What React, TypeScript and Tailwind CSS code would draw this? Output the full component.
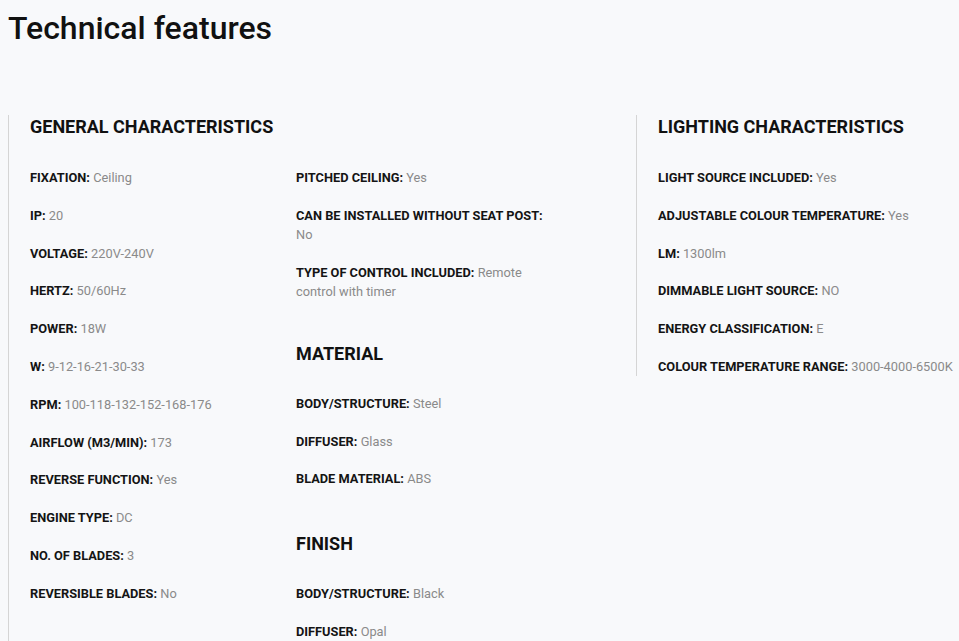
const general: [string, string][] = [
  ["FIXATION:", "Ceiling"],
  ["IP:", "20"],
  ["VOLTAGE:", "220V-240V"],
  ["HERTZ:", "50/60Hz"],
  ["POWER:", "18W"],
  ["W:", "9-12-16-21-30-33"],
  ["RPM:", "100-118-132-152-168-176"],
  ["AIRFLOW (M3/MIN):", "173"],
  ["REVERSE FUNCTION:", "Yes"],
  ["ENGINE TYPE:", "DC"],
  ["NO. OF BLADES:", "3"],
  ["REVERSIBLE BLADES:", "No"],
];

const generalMore: [string, string][] = [
  ["PITCHED CEILING:", "Yes"],
  ["CAN BE INSTALLED WITHOUT SEAT POST:", "No"],
  ["TYPE OF CONTROL INCLUDED:", "Remote control with timer"],
];

const material: [string, string][] = [
  ["BODY/STRUCTURE:", "Steel"],
  ["DIFFUSER:", "Glass"],
  ["BLADE MATERIAL:", "ABS"],
];

const finish: [string, string][] = [
  ["BODY/STRUCTURE:", "Black"],
  ["DIFFUSER:", "Opal"],
];

const lighting: [string, string][] = [
  ["LIGHT SOURCE INCLUDED:", "Yes"],
  ["ADJUSTABLE COLOUR TEMPERATURE:", "Yes"],
  ["LM:", "1300lm"],
  ["DIMMABLE LIGHT SOURCE:", "NO"],
  ["ENERGY CLASSIFICATION:", "E"],
  ["COLOUR TEMPERATURE RANGE:", "3000-4000-6500K"],
];

const Row = ({ label, value }: { label: string; value: string }) => (
  <p className="text-[12.8px] leading-[19px] mb-[18.8px] text-[#141414]">
    <span className="font-bold">{label}</span>{" "}
    <span className="text-[#8a8a8a]">{value}</span>
  </p>
);

const Heading = ({ children, sub }: { children: string; sub?: boolean }) => (
  <h3
    className={
      sub
        ? "text-[18px] leading-[24px] font-bold text-[#111] mb-[27.5px]"
        : "text-[18px] leading-[24px] font-bold text-[#111] mb-[29px]"
    }
  >
    {children}
  </h3>
);

const App = () => {
  return (
    <div className="h-[641px] bg-[#f8f9fb] pl-2 font-['Roboto',sans-serif] overflow-hidden">
      <h2 className="text-[32px] leading-[40px] font-medium text-[#111] pt-[8px]">Technical features</h2>

      <div className="flex items-start mt-[67px]">
        {/* General */}
        <div className="w-[628px] shrink-0 border-l border-[#d5d5d5] pl-[21px]">
          <Heading>GENERAL CHARACTERISTICS</Heading>
          <div className="flex">
            <div className="w-[266px] shrink-0">
              {general.map(([l, v]) => (
                <Row key={l} label={l} value={v} />
              ))}
            </div>
            <div className="w-[250px] shrink-0">
              {generalMore.map(([l, v]) => (
                <Row key={l} label={l} value={v} />
              ))}
              <div className="pt-[23px]">
                <Heading sub>MATERIAL</Heading>
                {material.map(([l, v]) => (
                  <Row key={l} label={l} value={v} />
                ))}
              </div>
              <div className="pt-[25px]">
                <Heading sub>FINISH</Heading>
                {finish.map(([l, v]) => (
                  <Row key={l} label={l} value={v} />
                ))}
              </div>
            </div>
          </div>
        </div>

        {/* Lighting */}
        <div className="w-[330px] shrink-0 border-l border-[#d5d5d5] pl-[21px] [&>p:last-child]:mb-0">
          <Heading>LIGHTING CHARACTERISTICS</Heading>
          {lighting.map(([l, v]) => (
            <Row key={l} label={l} value={v} />
          ))}
        </div>
      </div>
    </div>
  );
};

export default App;
